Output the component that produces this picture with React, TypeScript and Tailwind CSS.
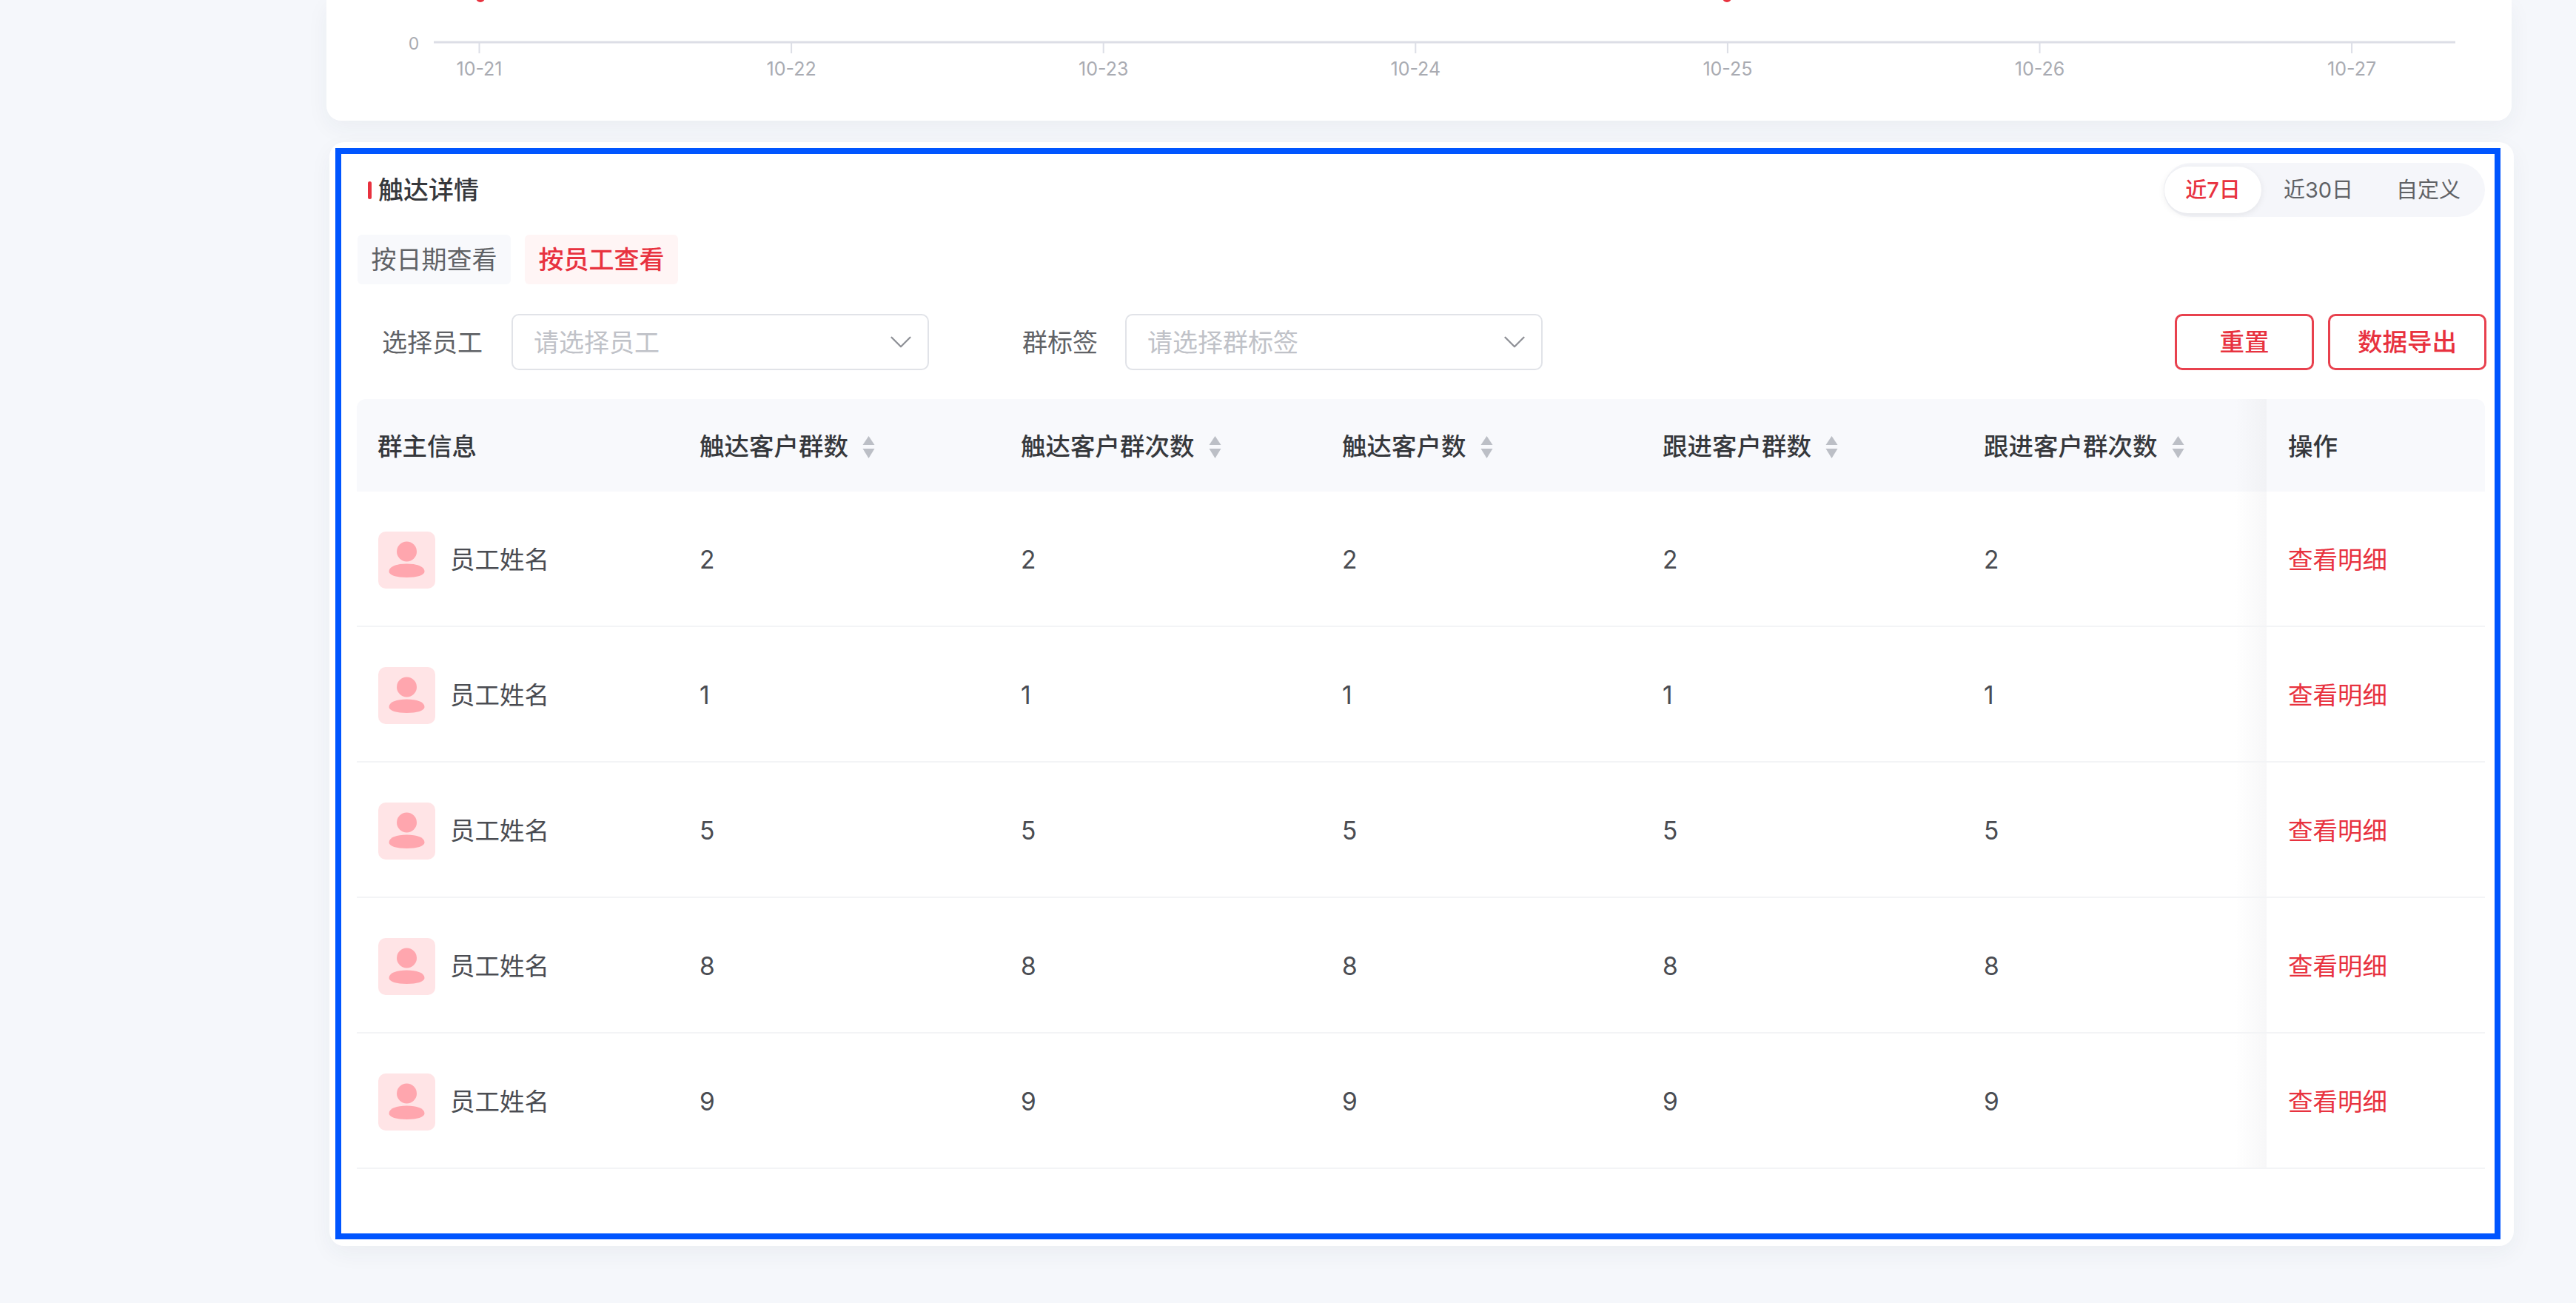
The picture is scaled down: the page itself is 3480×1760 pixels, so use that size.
import React from "react";
import { ChevronDown } from "lucide-react";

const font = "font-['Inter','Noto_Sans_CJK_SC',sans-serif]";

function Chart() {
  const labels = ["10-21", "10-22", "10-23", "10-24", "10-25", "10-26", "10-27"];
  return (
    <svg width="2952" height="163" viewBox="441 0 2952 163" className="block">
      <text x="559" y="67" textAnchor="middle" fontSize="23" fill="#a9abb2" fontFamily="Inter, sans-serif">0</text>
      <line x1="586" x2="3317" y1="57" y2="57" stroke="#dcdee6" strokeWidth="3" />
      {labels.map((l, i) => {
        const x = 647.5 + i * 421.6;
        return (
          <g key={l}>
            <line x1={x} x2={x} y1="58" y2="72" stroke="#dcdee6" strokeWidth="2" />
            <text x={x} y="102" textAnchor="middle" fontSize="25" fill="#a9abb2" fontFamily="Inter, sans-serif">{l}</text>
          </g>
        );
      })}
      <circle cx="649" cy="-3" r="6" fill="#e8323f" />
      <circle cx="2333" cy="-3" r="6" fill="#e8323f" />
    </svg>
  );
}

function Select({ placeholder }: { placeholder: string }) {
  return (
    <div className="w-[564px] h-[76px] rounded-[10px] border-2 border-[#e1e3e8] flex items-center justify-between pl-[28px] pr-[11px]">
      <span className="text-[34px] text-[#c0c2c8]">{placeholder}</span>
      <ChevronDown className="w-[50px] h-[50px] text-[#8e9096]" strokeWidth={1.1} />
    </div>
  );
}

function SortIcon() {
  return (
    <svg width="17" height="30" viewBox="0 0 17 30" className="ml-[19px]">
      <path d="M8.5 0 L16.5 12 H0.5 Z" fill="#bcbfc6" />
      <path d="M8.5 30 L16.5 17 H0.5 Z" fill="#bcbfc6" />
    </svg>
  );
}

function Avatar() {
  return (
    <div className="w-[77px] h-[77px] rounded-[10px] bg-[#ffe4e6] flex items-center justify-center">
      <svg width="77" height="77" viewBox="0 0 77 77">
        <circle cx="38.5" cy="27" r="13.5" fill="#ffa6ae" />
        <path d="M14.5 54 C14.5 47 25 43.5 38.5 43.5 C52 43.5 62.5 47 62.5 54 C62.5 59 52 62 38.5 62 C25 62 14.5 59 14.5 54 Z" fill="#ffa6ae" />
      </svg>
    </div>
  );
}

const cols = "grid grid-cols-[435px_434px_434px_433px_434px_410px_295px]";
const headers = ["触达客户群数", "触达客户群次数", "触达客户数", "跟进客户群数", "跟进客户群次数"];
const rows = [2, 1, 5, 8, 9];

export default function App() {
  return (
    <div className={`${font} relative w-[3480px] h-[1760px] overflow-hidden bg-[#f5f7fb]`}>
      <div className="w-[2952px] h-[163px] ml-[441px] bg-white rounded-b-[20px] shadow-[0_10px_30px_rgba(40,50,80,0.05)]">
        <Chart />
      </div>

      <div className="relative w-[2951px] h-[1491px] ml-[445px] mt-[29px] bg-white rounded-[20px] shadow-[0_10px_30px_rgba(40,50,80,0.05)] pt-[28px] pl-[37px] pr-[39px]">
        <div className="absolute left-[8px] top-[8px] w-[2925px] h-[1474px] border-[8px] border-[#0055ff]" />

        <div className="flex items-center justify-between h-[73px]">
          <div className="flex items-center pl-[15px] gap-[9px]">
            <span className="w-[5px] h-[24px] rounded-full bg-[#e8323f]" />
            <span className="text-[34px] font-medium text-[#36383c]">触达详情</span>
          </div>
          <div className="w-[434px] h-[73px] rounded-full bg-[#f5f6fa] flex items-center pl-[1px] text-[29px] text-[#606266]">
            <div className="w-[131px] h-[63px] rounded-full bg-white shadow-[0_2px_10px_rgba(0,0,0,0.08)] flex items-center justify-center text-[#e8323f] font-medium">近7日</div>
            <div className="w-[154px] flex justify-center">近30日</div>
            <div className="w-[143px] flex justify-center">自定义</div>
          </div>
        </div>

        <div className="flex gap-[19px] mt-[24px] pl-[1px]">
          <div className="w-[207px] h-[67px] rounded-[6px] bg-[#f8f9fc] flex items-center justify-center text-[34px] text-[#606266]">按日期查看</div>
          <div className="w-[207px] h-[67px] rounded-[6px] bg-[#fff5f5] flex items-center justify-center text-[34px] font-medium text-[#e8323f]">按员工查看</div>
        </div>

        <div className="flex items-center mt-[40px] h-[76px]">
          <span className="ml-[34px] mr-[39px] text-[34px] text-[#606266]">选择员工</span>
          <Select placeholder="请选择员工" />
          <span className="ml-[126px] mr-[37px] text-[34px] text-[#606266]">群标签</span>
          <Select placeholder="请选择群标签" />
          <div className="ml-auto -mr-[2px] flex gap-[19px]">
            <div className="w-[188px] h-[76px] rounded-[10px] border-[3px] border-[#e8414e] flex items-center justify-center text-[33.5px] font-medium text-[#e8323f]">重置</div>
            <div className="w-[214px] h-[76px] rounded-[10px] border-[3px] border-[#e8414e] flex items-center justify-center text-[33.5px] font-medium text-[#e8323f]">数据导出</div>
          </div>
        </div>

        <div className="mt-[39px]">
          <div className={`${cols} h-[125px] pt-[4px] rounded-t-[12px] bg-[#f8f9fc] text-[33.5px] font-medium text-[#36383c]`}>
            <div className="flex items-center pl-[28px]">群主信息</div>
            {headers.map((h) => (
              <div key={h} className="flex items-center pl-[28px]">
                {h}
                <SortIcon />
              </div>
            ))}
            <div className="relative -mt-[4px] pt-[4px] flex items-center pl-[29px]">
              <div className="absolute right-full top-0 bottom-0 w-[42px] bg-gradient-to-r from-transparent to-[#f1f2f5]" />
              操作
            </div>
          </div>
          {rows.map((n) => (
            <div key={n} className={`${cols} h-[183px] pt-[4px] border-b-2 border-[#f3f4f6] text-[33.5px] text-[#4a4c52]`}>
              <div className="flex items-center pl-[29px] gap-[20px]">
                <Avatar />
                <span>员工姓名</span>
              </div>
              {[0, 1, 2, 3, 4].map((i) => (
                <div key={i} className="flex items-center pl-[28px]">{n}</div>
              ))}
              <div className="relative -mt-[4px] pt-[4px] flex items-center pl-[29px] text-[#e8323f]">
                <div className="absolute right-full top-0 bottom-0 w-[42px] bg-gradient-to-r from-transparent to-[#f7f7f8]" />
                查看明细
              </div>
            </div>
          ))}
        </div>
      </div>
    </div>
  );
}
